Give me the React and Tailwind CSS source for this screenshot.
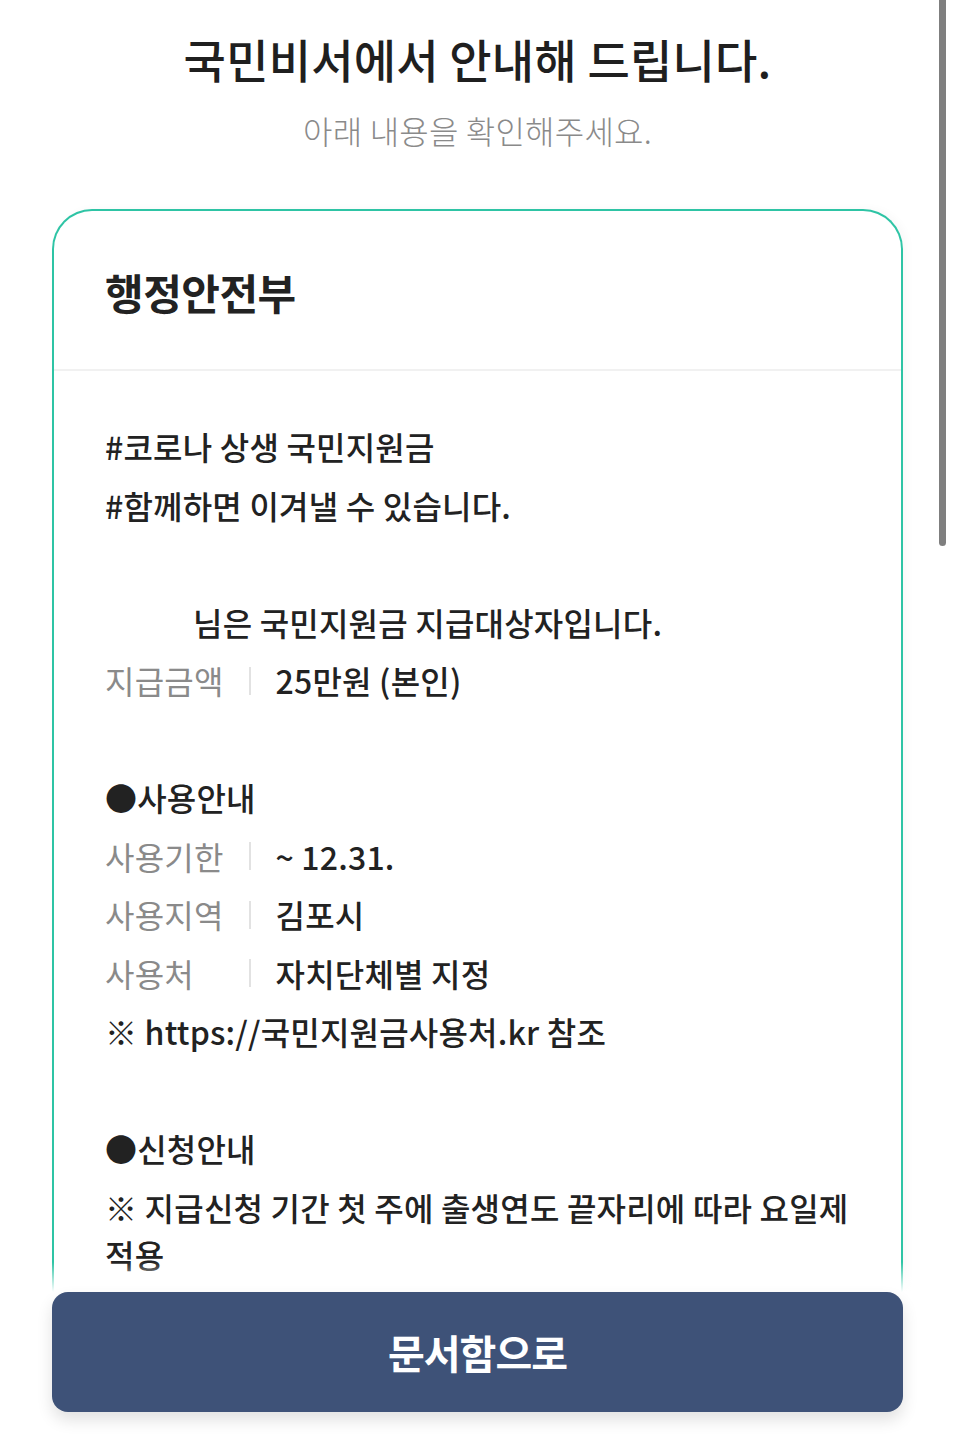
export default function App() {
  const font = { fontFamily: '"Noto Sans CJK KR", "Noto Sans", sans-serif' };

  const rows = [
    { type: 'text', text: '#코로나 상생 국민지원금' },
    { type: 'text', text: '#함께하면 이겨낼 수 있습니다.' },
    { type: 'blank' },
    { type: 'text', text: '님은 국민지원금 지급대상자입니다.', indent: true },
    { type: 'pair', label: '지급금액', value: '25만원 (본인)' },
    { type: 'blank' },
    { type: 'text', text: '●사용안내' },
    { type: 'pair', label: '사용기한', value: '~ 12.31.' },
    { type: 'pair', label: '사용지역', value: '김포시' },
    { type: 'pair', label: '사용처', value: '자치단체별 지정' },
    { type: 'text', text: '※ https://국민지원금사용처.kr 참조' },
    { type: 'blank' },
    { type: 'text', text: '●신청안내' },
    { type: 'text', text: '※ 지급신청 기간 첫 주에 출생연도 끝자리에 따라 요일제 적용' },
  ];

  return (
    <div className="relative h-[1440px] overflow-hidden bg-white text-[#222]" style={font}>
      {/* Header */}
      <div className="pt-[28px] text-center">
        <h1 className="text-[46px] leading-[60px] font-medium tracking-[0.2px] text-[#1f1f1f]">
          국민비서에서 안내해 드립니다.
        </h1>
        <p className="mt-[22px] text-[32px] leading-[40px] font-light tracking-[0.2px] text-[#8a8a8a]">
          아래 내용을 확인해주세요.
        </p>
      </div>

      {/* Card */}
      <div className="mx-[52px] mt-[59px] rounded-t-[40px] border-[2.5px] border-b-0 border-[#2ec4a5] bg-white pb-[200px] shadow-[4px_0_10px_rgba(0,0,0,0.03)]">
        <div className="px-[51px] pt-[57px] pb-[53px]">
          <h2 className="text-[42px] leading-[48px] font-bold tracking-[-0.5px] text-[#222]">행정안전부</h2>
        </div>
        <div className="h-[2px] bg-[#f1f1f1]" />

        <div className="px-[51px] pt-[52px]">
          {rows.map((row, i) => {
            if (row.type === 'blank') return <div key={i} className="h-[47px] mb-[11.5px]" />;
            if (row.type === 'pair') {
              return (
                <div key={i} className="flex items-center text-[32px] leading-[47px] mb-[11.5px] tracking-[0.2px]">
                  <span className="w-[144px] text-[#8a8a8a]">{row.label}</span>
                  <span className="h-[28px] w-[1.5px] bg-[#e2e2e2]" />
                  <span className="ml-[25px] font-medium text-[#222]">{row.value}</span>
                </div>
              );
            }
            return (
              <div
                key={i}
                className={`text-[32px] leading-[47px] mb-[11.5px] tracking-[0.2px] font-medium text-[#222] ${row.indent ? 'pl-[88px]' : ''}`}
              >
                {row.text}
              </div>
            );
          })}
        </div>
      </div>

      {/* Bottom button overlay */}
      <div className="absolute inset-x-0 bottom-0">
        <div className="h-[30px] bg-gradient-to-b from-white/0 to-white" />
        <div className="bg-white px-[52px] pb-[28px]">
          <button className="flex h-[120px] w-full items-center justify-center rounded-[16px] bg-[#3e5278] text-[40px] font-bold tracking-[-1px] text-white shadow-[0_8px_16px_rgba(0,0,0,0.12)]">
            문서함으로
          </button>
        </div>
      </div>

      {/* Scrollbar */}
      <div className="absolute right-[9px] top-0 h-[546px] w-[7px] rounded-b-full bg-[#7f7f7f]" />
    </div>
  );
}
